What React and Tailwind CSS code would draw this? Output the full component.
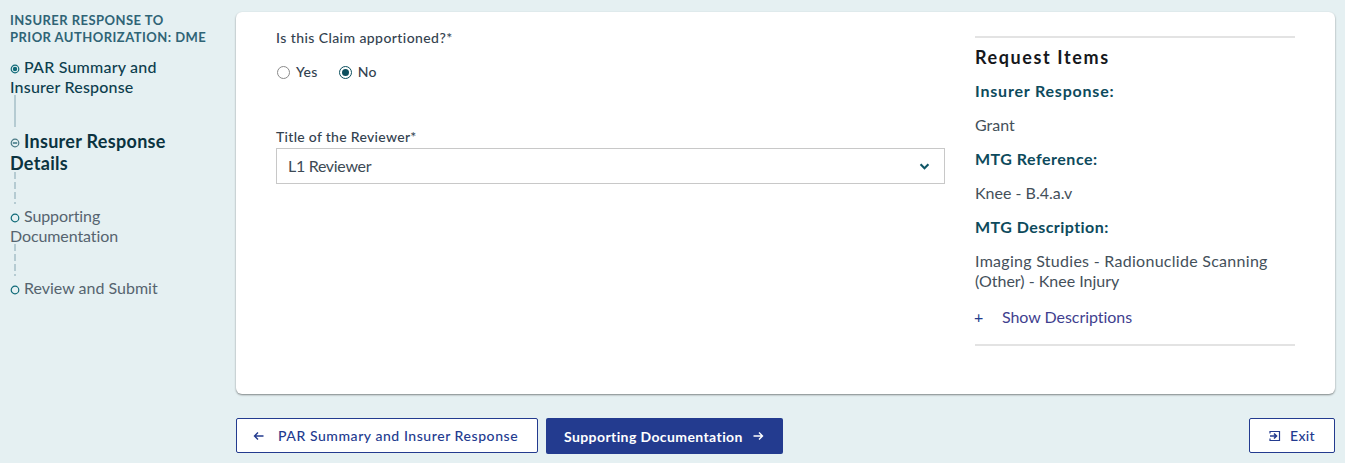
import React from "react";

function Dot({ kind }) {
  return (
    <svg width="10" height="10" viewBox="0 0 10 10" className="inline-block mr-[4px]">
      <circle cx="5" cy="5" r="3.8" fill="none" stroke={kind === "current" ? "#4a7a86" : "#0f6a78"} strokeWidth="1.2" />
      {kind === "done" && <circle cx="5" cy="5" r="2.2" fill="#0f6a78" />}
      {kind === "current" && <path d="M2.8 5H7.2" stroke="#0f5666" strokeWidth="1.2" />}
    </svg>
  );
}

function Line({ dashed, first }) {
  return (
    <div
      className={
        "ml-[4px] w-[2px] h-[32px] -mt-[2px] " +
        (first ? "mb-[3px] " : "mb-[2px] ") +
        (dashed
          ? "bg-[repeating-linear-gradient(to_bottom,#b5cbd2_0,#b5cbd2_7px,transparent_7px,transparent_10px)]"
          : "bg-[#b5cbd2]")
      }
    />
  );
}

function Radio({ checked, label }) {
  return (
    <label className="flex items-center gap-[6px] text-[14px] leading-[20px] text-[#33424f] font-medium tracking-[0.3px]">
      <span
        className={
          "w-[13px] h-[13px] rounded-full border flex items-center justify-center bg-white " +
          (checked ? "border-[#0c4f5e] border-[1.5px]" : "border-[#8a8a8a]")
        }
      >
        {checked && <span className="w-[7px] h-[7px] rounded-full bg-[#0c4f5e]" />}
      </span>
      {label}
    </label>
  );
}

export default function App() {
  return (
    <div className="w-[1345px] h-[463px] overflow-hidden bg-[#e5f0f2] flex font-['Lato',sans-serif] text-[#33424f]">
      <aside className="w-[236px] shrink-0 pl-[10px] pr-[30px] pt-[12px]">
        <div className="text-[13px] leading-[17px] font-bold text-[#2f6476] tracking-[0.46px] whitespace-nowrap">
          INSURER RESPONSE TO
          <br />
          PRIOR AUTHORIZATION: DME
        </div>
        <div className="mt-[11px] text-[16px] leading-[20px] font-medium text-[#0d3e4e] tracking-[0.2px]">
          <Dot kind="done" />
          PAR Summary and Insurer Response
        </div>
        <Line first />
        <div className="text-[18px] leading-[22px] font-bold text-[#0b3340] tracking-[0.3px]">
          <Dot kind="current" />
          Insurer Response Details
        </div>
        <Line dashed />
        <div className="text-[16px] leading-[20px] text-[#56646f] tracking-[-0.1px]">
          <Dot />
          Supporting Documentation
        </div>
        <Line dashed />
        <div className="text-[16px] leading-[20px] text-[#56646f]">
          <Dot />
          Review and Submit
        </div>
      </aside>

      <main className="flex-1 pt-[12px] pr-[10px] min-w-0">
        <div className="h-[382px] bg-white rounded-[6px] shadow-[0_1px_2px_rgba(0,0,0,0.45)] pl-[40px] flex">
          <div className="w-[669px] pt-[17px]">
            <div className="text-[14px] leading-[18px] font-medium tracking-[0.42px] text-[#33424f]">
              Is this Claim apportioned?*
            </div>
            <div className="mt-[15px] flex items-center gap-[21px] pl-[1px]">
              <Radio label="Yes" />
              <Radio checked label="No" />
            </div>
            <div className="mt-[46px] text-[14px] leading-[18px] font-medium tracking-[0.3px] text-[#33424f]">
              Title of the Reviewer*
            </div>
            <div className="mt-[2px] h-[36px] border border-[#c8c8c8] flex items-center justify-between pl-[11px] pr-[14px] text-[16px] tracking-[-0.3px] text-[#3d4a55]">
              <span>L1 Reviewer</span>
              <svg width="11" height="7" viewBox="0 0 12 8">
                <path d="M1.5 1.5 6 6l4.5-4.5" fill="none" stroke="#0f5666" strokeWidth="2.4" />
              </svg>
            </div>
          </div>

          <div className="ml-[30px] w-[320px] mt-[24px] h-[310px] border-t-2 border-b-2 border-[#e3e3e3] text-[16px] leading-[20px] text-[#44505a]">
            <div className="mt-[8px] text-[18px] leading-[22px] font-bold tracking-[1.6px] text-[#16181c]">
              Request Items
            </div>
            <div className="mt-[13px] font-bold text-[#0d4a5c] tracking-[0.8px]">Insurer Response:</div>
            <div className="mt-[14px]">Grant</div>
            <div className="mt-[14px] font-bold text-[#0d4a5c] tracking-[0.5px]">MTG Reference:</div>
            <div className="mt-[14px]">Knee - B.4.a.v</div>
            <div className="mt-[14px] font-bold text-[#0d4a5c] tracking-[0.45px]">MTG Description:</div>
            <div className="mt-[14px]">
              <span className="tracking-[0.28px]">Imaging Studies - Radionuclide Scanning</span>
              <br />
              (Other) - Knee Injury
            </div>
            <div className="mt-[16px] flex text-[#3f3f8f]">
              <span className="w-[27px] text-[#223a8c] -ml-[1px] mr-[1px]">+</span>
              <span className="tracking-[-0.05px]">Show Descriptions</span>
            </div>
          </div>
        </div>

        <div className="mt-[24px] flex items-start gap-[8px]">
          <button className="h-[35px] w-[302px] bg-white border border-[#233b8f] rounded-[2px] flex items-center pl-[16px] text-[14px] font-medium tracking-[0.56px] text-[#233b8f] whitespace-nowrap">
            <svg width="12" height="12" viewBox="0 0 12 12" className="mr-[13px]">
              <path d="M10.5 6H1.5M5 2.5 1.5 6 5 9.5" fill="none" stroke="#233b8f" strokeWidth="1.4" />
            </svg>
            PAR Summary and Insurer Response
          </button>
          <button className="h-[36px] w-[237px] bg-[#233b8f] rounded-[2px] flex items-center pl-[18px] text-[14px] font-bold tracking-[0.4px] text-white whitespace-nowrap">
            Supporting Documentation
            <svg width="12" height="12" viewBox="0 0 12 12" className="ml-[9px] -mt-[1px]">
              <path d="M1.5 6h9M7 2.5 10.5 6 7 9.5" fill="none" stroke="#ffffff" strokeWidth="1.4" />
            </svg>
          </button>
          <button className="ml-auto h-[35px] w-[86px] bg-white border border-[#233b8f] rounded-[2px] flex items-center pl-[19px] text-[14px] font-medium tracking-[0.3px] text-[#233b8f]">
            <svg width="12" height="12" viewBox="0 0 12 12" className="mr-[9px]">
              <path d="M1 3.5V1.5h9.5v9H1v-2" fill="none" stroke="#233b8f" strokeWidth="1.2" />
              <path d="M1 6h6M5 3.5 7.5 6 5 8.5" fill="none" stroke="#233b8f" strokeWidth="1.6" />
            </svg>
            Exit
          </button>
        </div>
      </main>
    </div>
  );
}
